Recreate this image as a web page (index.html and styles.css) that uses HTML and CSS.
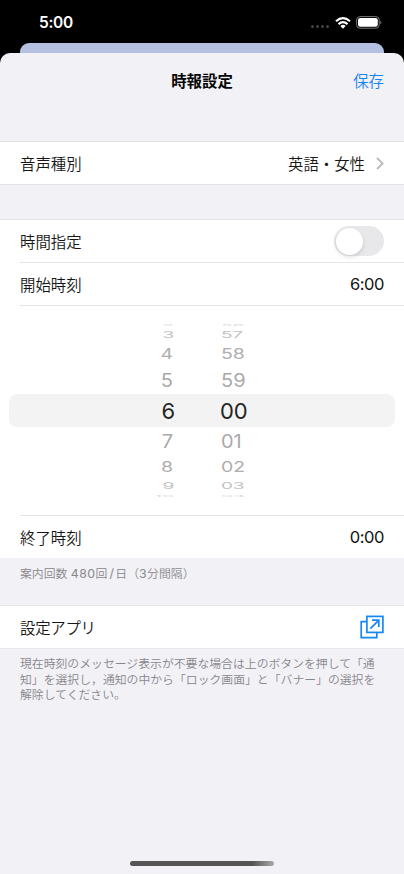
FILE: index.html
```html
<!DOCTYPE html>
<html lang="ja">
<head>
<meta charset="utf-8">
<title>時報設定</title>
<link rel="stylesheet" href="styles.css">
</head>
<body>
<div class="screen">
  <div class="status">
    <span class="clock">5:00</span>
    <div class="status-icons">
      <span class="dots"><i></i><i></i><i></i><i></i></span>
      <svg class="wifi" width="16" height="12" viewBox="0 0 16 12" fill="none" stroke="#fff" stroke-width="2.1"><path d="M1 4.3Q8-2 15 4.3"/><path d="M3.5 7.1Q8 3 12.5 7.1"/><path d="M5.4 9Q8 6.6 10.6 9L8 11.7Z" fill="#fff" stroke="none"/></svg>
      <svg class="battery" width="26" height="13" viewBox="0 0 26 13"><rect x=".6" y=".6" width="22.6" height="11.6" rx="3.4" fill="none" stroke="#777" stroke-width="1"/><rect x="2" y="2" width="19.8" height="8.8" rx="2.2" fill="#fff"/><path d="M24.3 4.4Q26.6 6.4 24.3 8.4Z" fill="#777"/></svg>
    </div>
  </div>
  <div class="behind"></div>
  <main class="sheet">
    <header class="nav"><span></span><h1>時報設定</h1><a class="save">保存</a></header>
    <section class="group voice">
      <div class="row"><span>音声種別</span><span class="value">英語・女性<svg class="chevron" width="8" height="13" viewBox="0 0 8 13" fill="none" stroke="#bdbdc1" stroke-width="2"><path d="M1 1L6.6 6.5L1 12"/></svg></span></div>
    </section>
    <section class="group times">
      <div class="row"><span>時間指定</span><span class="switch"><i></i></span></div>
      <div class="row line"><span>開始時刻</span><span class="num">6:00</span></div>
      <div class="picker line">
        <div class="wheel">
          <div class="tick t4"><span>2</span><span>56</span></div>
          <div class="tick t3"><span>3</span><span>57</span></div>
          <div class="tick t2"><span>4</span><span>58</span></div>
          <div class="tick t1"><span>5</span><span>59</span></div>
          <div class="tick t0"><span>6</span><span>00</span></div>
          <div class="tick t1"><span>7</span><span>01</span></div>
          <div class="tick t2"><span>8</span><span>02</span></div>
          <div class="tick t3"><span>9</span><span>03</span></div>
          <div class="tick t4"><span>10</span><span>04</span></div>
        </div>
      </div>
      <div class="row line"><span>終了時刻</span><span class="num">0:00</span></div>
    </section>
    <p class="note count">案内回数 <b>480</b>回<b class="slash">/</b>日（<b>3</b>分間隔）</p>
    <section class="group app">
      <div class="row"><span class="kana">設定アプリ</span><svg class="open" width="24" height="24" viewBox="0 0 24 24" fill="none" stroke="#1688f3" stroke-width="1.7"><path d="M6.2 6.6H1.2V22.6H16.8V17.6"/><rect x="6.9" y="1.4" width="16" height="16"/><path d="M10.4 13.6L18.6 5.4M12 5.2H18.8V12"/></svg></div>
    </section>
    <p class="note help">現在時刻のメッセージ表示が不要な場合は上のボタンを押して「通<br>知」を選択し，通知の中から「ロック画面」と「バナー」の選択を<br>解除してください。</p>
    <div class="home"></div>
  </main>
</div>
</body>
</html>
```
FILE: styles.css
```css
* { box-sizing: border-box; }
body { margin: 0; background: #000; }
.screen {
  width: 404px; height: 874px; overflow: hidden;
  display: flex; flex-direction: column;
  background: #000; color: #161616;
  font-family: Inter, "Noto Sans CJK JP", sans-serif;
  font-size: 15.4px; font-weight: 350;
}
.status {
  height: 43px; flex: none; padding: 2px 22px 0 39px;
  display: flex; align-items: center; justify-content: space-between;
}
.clock { color: #fff; font-size: 15.5px; font-weight: 600; letter-spacing: -.3px; }
.status-icons { display: flex; align-items: center; }
.dots { display: flex; gap: 2px; padding-top: 8px; margin-right: 6px; }
.dots i { width: 3px; height: 3px; border-radius: 50%; background: #444; }
.wifi { margin-right: 5px; }
.behind { height: 10px; flex: none; margin: 0 20px; background: #b5bfe0; border-radius: 9px 9px 0 0; }
.sheet {
  flex: 1; display: flex; flex-direction: column;
  background: #f2f1f6; border-radius: 10px 10px 0 0;
}
.nav {
  height: 54px; padding: 0 20px 1px;
  display: grid; grid-template-columns: 1fr auto 1fr; align-items: center;
}
h1 { margin: 0; font-size: 15.4px; font-weight: 700; color: #050505; }
.save { justify-self: end; color: #1684f3; }
.group { background: #fff; border-top: 1px solid #e3e3e6; border-bottom: 1px solid #e3e3e6; }
.voice { margin-top: 34px; }
.times { margin-top: 34px; border-bottom: 0; }
.row {
  height: 42px; padding: 0 20px;
  display: flex; align-items: center; justify-content: space-between;
}
.line {
  height: 43px;
  background: linear-gradient(#e5e5e7, #e5e5e7) 20px 0 / 384px 1px no-repeat;
}
.value { display: flex; align-items: center; gap: 11px; }
.kana { letter-spacing: -.25px; }
.num { font-size: 16.5px; font-weight: 400; letter-spacing: -.45px; color: #111; }
.switch {
  width: 50px; height: 30px; padding: 2px; border-radius: 15px; background: #e8e8ea;
}
.switch i {
  display: block; width: 27px; height: 27px; border-radius: 50%;
  background: #fff; box-shadow: 0 2px 4px #0002;
}
.picker { height: 210px; padding: 17px 9px 0; }
.tick {
  display: grid; grid-template-columns: 164px 1fr; column-gap: 48px;
  align-content: center; line-height: 20px; font-size: 20px; font-weight: 400; color: #a9a9ab;
}
.tick span { transform: scaleY(var(--squash)); }
.tick span:first-child { text-align: right; }
.t0 {
  --squash: 1; height: 33px; grid-template-columns: 166px 1fr; column-gap: 45px;
  border-radius: 8px; background: #f3f3f4; color: #242424; font-size: 22px; letter-spacing: -.2px;
}
.t1 { --squash: .93; height: 28px; }
.t2 { --squash: .74; height: 24px; font-size: 19.5px; color: #aeaeb0; }
.t3 { --squash: .48; height: 14px; grid-template-columns: 165px 1fr; column-gap: 47px; font-size: 19px; letter-spacing: -.2px; color: #c2c2c4; }
.t4 { --squash: .14; height: 6px; grid-template-columns: 165px 1fr; column-gap: 47px; font-size: 19px; color: #dadadc; }
.note { margin: 0; padding: 0 20px; font-size: 11.85px; line-height: 15.6px; color: #88878c; white-space: nowrap; }
.note b { font-weight: 400; font-size: 12.3px; letter-spacing: .5px; }
.note .slash { margin: 0 1px 0 2px; }
.count { padding-top: 8px; height: 47px; }
.app .row { height: 42px; }
.app { border-color: #e8e8eb; }
.help { padding-top: 8px; }
.home {
  width: 144px; height: 5px; margin: auto auto 8px; border-radius: 3px;
  background: linear-gradient(90deg, #555 85%, #aaa);
}
```
